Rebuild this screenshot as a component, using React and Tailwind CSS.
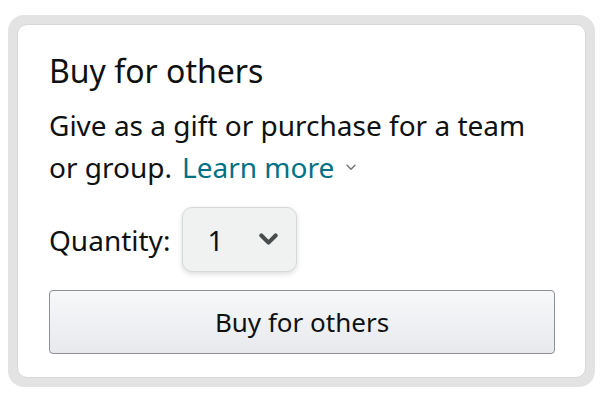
const ChevronDown = ({ className, strokeWidth = 2 }) => (
  <svg viewBox="0 0 12 8" className={className} fill="none" stroke="currentColor" strokeWidth={strokeWidth} strokeLinecap="round" strokeLinejoin="round">
    <path d="M1.5 1.5 6 6l4.5-4.5" />
  </svg>
);

export default function App() {
  return (
    <div className="w-[600px] h-[400px] bg-white pt-[15px] pl-[8px]" style={{ fontFamily: '"Noto Sans", "Open Sans", Arial, sans-serif' }}>
      <div className="w-[587px] h-[372px] rounded-[16px] bg-[#e3e3e3] p-[9px]">
        <div className="h-full rounded-[10px] bg-white border border-[#d5d9d9] px-[31px] pt-[26px] text-[#0f1111]">
          <h2 className="text-[32px] leading-[40px] font-normal">Buy for others</h2>
          <p className="mt-[13px] text-[28px] leading-[42px]">
            Give as a gift or purchase for a team or group.
            <span className="text-[#007185] ml-[10px]">Learn more</span>
            <ChevronDown className="inline-block w-[12px] h-[7px] ml-[11px] mb-[6px] text-[#6f7373]" strokeWidth={1.6} />
          </p>
          <div className="mt-[19px] flex items-center gap-[12px]">
            <span className="text-[28px] leading-[42px]">Quantity:</span>
            <div className="w-[115px] h-[65px] rounded-[10px] bg-[#f0f2f2] border border-[#d5d9d9] shadow-[0_2px_5px_rgba(15,17,17,0.15)] flex items-center justify-between pl-[24px] pr-[18px]">
              <span className="text-[28px]">1</span>
              <ChevronDown className="w-[19px] h-[13px] text-[#4a4d4d]" strokeWidth={2.6} />
            </div>
          </div>
          <button className="mt-[18px] w-[506px] h-[64px] rounded-[4px] border border-[#8d9096] bg-gradient-to-b from-[#f7f8fa] to-[#e7e9ec] text-[26px] text-[#0f1111]">
            Buy for others
          </button>
        </div>
      </div>
    </div>
  );
}
